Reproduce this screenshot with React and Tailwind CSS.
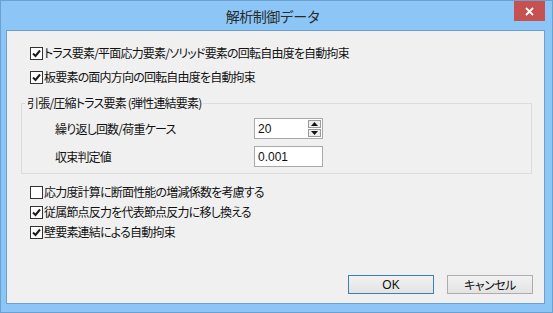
import React from "react";

const jp = { fontFamily: '"Noto Sans CJK JP", "Noto Sans", sans-serif' };

function Check({ checked }) {
  return (
    <span className="w-[13px] h-[13px] border border-[#333333] bg-white flex items-center justify-center shrink-0">
      {checked && (
        <svg width="9" height="9" viewBox="0 0 9 9">
          <path d="M1 4.5 L3.5 7 L8 1.5" stroke="#1a1a1a" strokeWidth="2" fill="none" />
        </svg>
      )}
    </span>
  );
}

function CheckRow({ checked, label }) {
  return (
    <div className="h-[20px] flex items-center gap-[1px]">
      <Check checked={checked} />
      <span className="text-[12px] leading-[16px] tracking-[-0.8px] text-[#111] [font-feature-settings:'palt']">{label}</span>
    </div>
  );
}

function SpinBtn({ up }) {
  return (
    <div className="w-[13px] h-[8px] border border-[#9a9a9a] bg-[#ececec] flex items-center justify-center">
      <svg width="7" height="4" viewBox="0 0 7 4">
        {up ? <path d="M0 4 L3.5 0 L7 4 Z" fill="#111" /> : <path d="M0 0 L3.5 4 L7 0 Z" fill="#111" />}
      </svg>
    </div>
  );
}

export default function App() {
  return (
    <div
      className="w-[553px] h-[313px] border border-[#6e9fd1] bg-[#8cc6f7] flex flex-col overflow-hidden"
      style={jp}
    >
      <div className="h-[29px] shrink-0 relative flex items-start justify-center pr-[7px]">
        <span className="mt-[6px] text-[14px] leading-[18px] tracking-[-0.5px] text-[#2a2a2a]">解析制御データ</span>
        <div className="absolute right-[7px] top-0 w-[31px] h-[20px] bg-[#c75050] flex items-center justify-center">
          <svg width="9" height="9" viewBox="0 0 9 9">
            <path d="M1 1 L8 8 M8 1 L1 8" stroke="#fff" strokeWidth="1.8" />
          </svg>
        </div>
      </div>
      <div className="ml-[5px] mr-[7px] mb-[8px] flex-1 border border-[#6e9fd1] bg-[#f0f0f0] flex flex-col">
        <div className="pl-[23px] pt-[12px] flex flex-col gap-[4px]">
          <CheckRow checked label="トラス要素/平面応力要素/ソリッド要素の回転自由度を自動拘束" />
          <CheckRow checked label="板要素の面内方向の回転自由度を自動拘束" />
        </div>
        <fieldset className="ml-[14px] w-[511px] mt-[8px] border border-[#dcdcdc] pb-[6px]">
          <legend className="ml-[3px] px-[2px] text-[12px] leading-[16px] tracking-[-0.8px] text-[#111] [font-feature-settings:'palt']">
            引張/圧縮トラス要素 (弾性連結要素)
          </legend>
          <div className="pt-[7px] flex flex-col gap-[7px]">
            <div className="flex items-center h-[21px]">
              <span className="pl-[33px] w-[232px] text-[12px] leading-[16px] tracking-[-0.8px] text-[#111] [font-feature-settings:'palt']">
                繰り返し回数/荷重ケース
              </span>
              <div className="w-[69px] h-[21px] border border-[#a9a9a9] bg-white flex items-center justify-between pl-[3px] pr-[1px]">
                <span className="text-[12px] leading-[14px] text-[#111]" style={{ fontFamily: '"Liberation Sans", sans-serif' }}>20</span>
                <div className="flex flex-col gap-[1px]">
                  <SpinBtn up />
                  <SpinBtn />
                </div>
              </div>
            </div>
            <div className="flex items-center h-[21px]">
              <span className="pl-[33px] w-[232px] text-[12px] leading-[16px] tracking-[-0.8px] text-[#111]">収束判定値</span>
              <div className="w-[69px] h-[21px] border border-[#a9a9a9] bg-white flex items-center pl-[3px]">
                <span className="text-[12px] leading-[14px] text-[#111]" style={{ fontFamily: '"Liberation Sans", sans-serif' }}>0.001</span>
              </div>
            </div>
          </div>
        </fieldset>
        <div className="pl-[23px] mt-[8px] flex flex-col">
          <CheckRow label="応力度計算に断面性能の増減係数を考慮する" />
          <CheckRow checked label="従属節点反力を代表節点反力に移し換える" />
          <CheckRow checked label="壁要素連結による自動拘束" />
        </div>
        <div className="mt-auto mb-[9px] flex justify-end gap-[13px] pr-[11px]">
          <div className="w-[86px] h-[19px] border border-[#3c7fb1] bg-gradient-to-b from-[#f2f2f2] to-[#e3e3e3] flex items-center justify-center text-[12px] text-[#111]" style={{ fontFamily: '"Liberation Sans", sans-serif' }}>
            OK
          </div>
          <div className="w-[86px] h-[19px] border border-[#acacac] bg-gradient-to-b from-[#f2f2f2] to-[#e3e3e3] flex items-center justify-center text-[12px] tracking-[-0.5px] text-[#111] [font-feature-settings:'palt']">
            キャンセル
          </div>
        </div>
      </div>
    </div>
  );
}
